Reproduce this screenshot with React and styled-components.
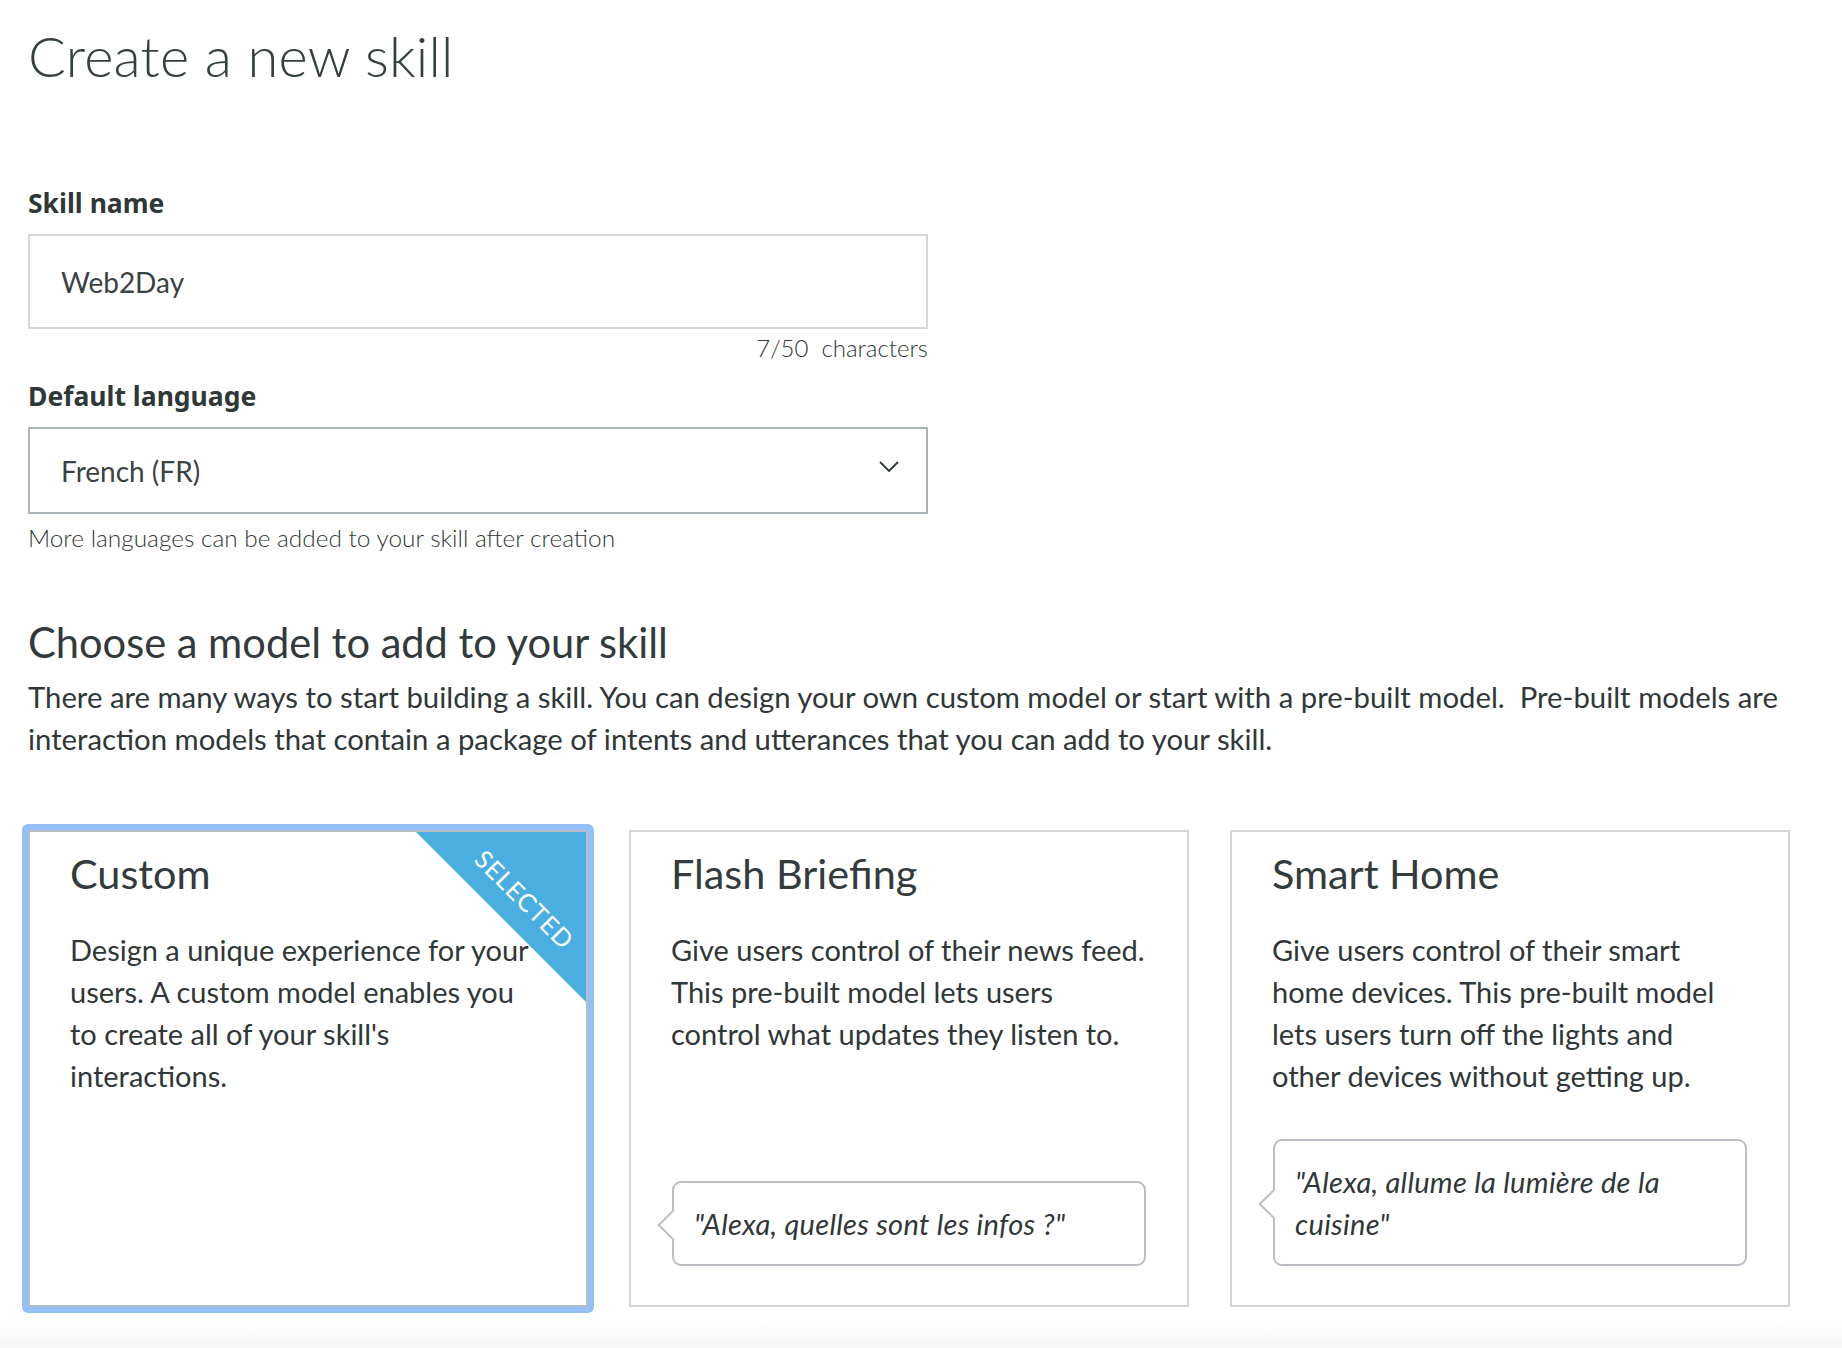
import React from "react";
import styled, { createGlobalStyle } from "styled-components";

const Global = createGlobalStyle`
  html, body { margin: 0; padding: 0; background: #ffffff; }
  body {
    font-family: Lato, "Open Sans", "Liberation Sans", sans-serif;
    color: #333b3b;
    overflow: hidden;
  }
  * { box-sizing: border-box; }
`;

const Page = styled.main`
  padding: 0 28px;
  width: 1842px;
  height: 1348px;
  position: relative;
`;

const Title = styled.h1`
  margin: 24px 0 0 0;
  font-size: 56px;
  line-height: 64px;
  font-weight: 300;
  color: #354040;
  letter-spacing: 0.2px;
`;

const Form = styled.div`
  width: 900px;
  display: flex;
  flex-direction: column;
`;

const Label = styled.label`
  margin-top: ${(p) => p.$top}px;
  font-family: "Noto Sans", Lato, sans-serif;
  font-size: 26.5px;
  line-height: 30px;
  font-weight: 700;
  color: #2f3737;
`;

const Box = styled.div`
  margin-top: 16px;
  height: ${(p) => p.$h}px;
  border: 2px solid ${(p) => p.$border};
  display: flex;
  align-items: center;
  justify-content: space-between;
  padding: 0 27px 0 31px;
  font-size: 28px;
  color: #3a4242;
  background: #fff;
`;

const Hint = styled.div`
  margin-top: ${(p) => p.$top}px;
  font-size: ${(p) => p.$size}px;
  line-height: 30px;
  font-weight: 300;
  color: #2f3737;
  text-align: ${(p) => (p.$right ? "right" : "left")};
`;

const Heading = styled.h2`
  margin: 65px 0 0 0;
  font-size: 41.6px;
  line-height: 48px;
  font-weight: 400;
  color: #323a3a;
`;

const Intro = styled.p`
  margin: 10px 0 0 0;
  font-size: 29.3px;
  line-height: 42px;
  color: #2f3737;
  white-space: pre-wrap;
`;

const Cards = styled.div`
  margin-top: 70px;
  display: grid;
  grid-template-columns: repeat(3, 560px);
  column-gap: 41px;
`;

const Card = styled.div`
  position: relative;
  height: 477px;
  border: 2px solid ${(p) => (p.$selected ? "#b4bcc6" : "#d3d6d9")};
  border-radius: ${(p) => (p.$selected ? "2px" : "0")};
  box-shadow: ${(p) => (p.$selected ? "0 0 0 6px #93c0f6" : "none")};
  padding: 17px 41px 39px 40px;
  display: flex;
  flex-direction: column;
  background: #fff;
`;

const CardTitle = styled.h3`
  margin: 0;
  font-size: 41.4px;
  line-height: 48px;
  font-weight: 400;
  color: #333b3b;
`;

const CardText = styled.p`
  margin: 32px 0 0 0;
  font-size: 29px;
  line-height: 42px;
  color: #2f3737;
  white-space: nowrap;
  position: relative;
  z-index: 1;
`;

const Ribbon = styled.div`
  position: absolute;
  top: 0;
  right: 0;
  width: 170px;
  height: 170px;
  background: #4baee0;
  clip-path: polygon(0 0, 100% 0, 100% 100%);
`;

const RibbonText = styled.span`
  position: absolute;
  left: 29px;
  top: 53px;
  width: 160px;
  height: 28px;
  line-height: 28px;
  text-align: center;
  transform: rotate(45deg);
  color: #ffffff;
  font-size: 25px;
  letter-spacing: 1px;
  font-weight: 400;
`;

const Bubble = styled.div`
  position: relative;
  margin-top: auto;
  margin-left: 1px;
  border: 2px solid #b9bdc4;
  border-radius: 9px;
  padding: 19.5px 20px;
  font-size: 29px;
  line-height: 42px;
  font-style: italic;
  letter-spacing: 0.3px;
  color: #2f3737;
  background: #fff;

  &::before {
    content: "";
    position: absolute;
    left: -12px;
    top: 50%;
    width: 20px;
    height: 20px;
    margin-top: -10px;
    background: #fff;
    border-left: 2px solid #b9bdc4;
    border-bottom: 2px solid #b9bdc4;
    transform: rotate(45deg);
  }
`;

const Fade = styled.div`
  position: absolute;
  left: 0;
  right: 0;
  bottom: 0;
  height: 52px;
  background: linear-gradient(to bottom, rgba(245, 245, 245, 0), rgba(240, 240, 240, 1));
  pointer-events: none;
`;

const Chevron = () => (
  <svg width="20" height="12" viewBox="0 0 20 12" style={{ marginTop: -8 }}>
    <polyline points="1,1 10,10 19,1" fill="none" stroke="#2f3737" strokeWidth="1.8" />
  </svg>
);

const Lines = ({ lines }) =>
  lines.map((l, i) => (
    <React.Fragment key={i}>
      {i > 0 && <br />}
      {l}
    </React.Fragment>
  ));

const cards = [
  {
    title: "Custom",
    selected: true,
    lines: [
      "Design a unique experience for your",
      "users. A custom model enables you",
      "to create all of your skill's",
      "interactions.",
    ],
  },
  {
    title: "Flash Briefing",
    lines: [
      "Give users control of their news feed.",
      "This pre-built model lets users",
      "control what updates they listen to.",
    ],
    quote: ['"Alexa, quelles sont les infos ?"'],
  },
  {
    title: "Smart Home",
    lines: [
      "Give users control of their smart",
      "home devices. This pre-built model",
      "lets users turn off the lights and",
      "other devices without getting up.",
    ],
    quote: ['"Alexa, allume la lumière de la', 'cuisine"'],
  },
];

export default function App() {
  return (
    <>
      <Global />
      <Page>
        <Title>Create a new skill</Title>
        <Form>
          <Label $top={100}>Skill name</Label>
          <Box $h={95} $border="#d5d9dc">
            <span>Web2Day</span>
          </Box>
          <Hint $top={4} $size={24} $right>
            7/50&nbsp; characters
          </Hint>
          <Label $top={18}>Default language</Label>
          <Box $h={87} $border="#aab4b6">
            <span>French (FR)</span>
            <Chevron />
          </Box>
          <Hint $top={9} $size={24.4}>More languages can be added to your skill after creation</Hint>
        </Form>
        <Heading>Choose a model to add to your skill</Heading>
        <Intro>
          {"There are many ways to start building a skill. You can design your own custom model or start with a pre-built model.  Pre-built models are\ninteraction models that contain a package of intents and utterances that you can add to your skill."}
        </Intro>
        <Cards>
          {cards.map((c) => (
            <Card key={c.title} $selected={c.selected}>
              {c.selected && (
                <Ribbon>
                  <RibbonText>SELECTED</RibbonText>
                </Ribbon>
              )}
              <CardTitle>{c.title}</CardTitle>
              <CardText>
                <Lines lines={c.lines} />
              </CardText>
              {c.quote && (
                <Bubble>
                  <Lines lines={c.quote} />
                </Bubble>
              )}
            </Card>
          ))}
        </Cards>
        <Fade />
      </Page>
    </>
  );
}
